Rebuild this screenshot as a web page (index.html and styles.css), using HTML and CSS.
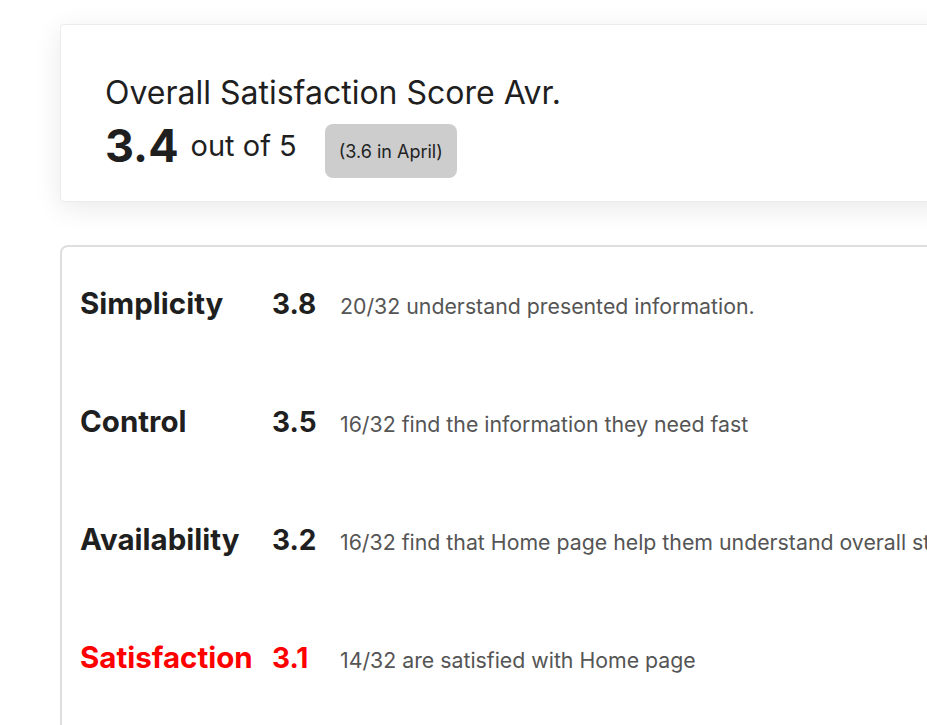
FILE: index.html
```html
<!DOCTYPE html>
<html>
<head>
<meta charset="utf-8">
<link rel="stylesheet" href="styles.css">
</head>
<body>
<div class="page">
  <section class="summary">
    <h1 class="summary-title">Overall Satisfaction Score Avr.</h1>
    <div class="summary-score">
      <span class="score-big">3.4</span>
      <span class="score-out">out of 5</span>
      <span class="badge">(3.6 in April)</span>
    </div>
  </section>
  <section class="metrics">
    <div class="row">
      <span class="label">Simplicity</span>
      <span class="value">3.8</span>
      <span class="desc">20/32 understand presented information.</span>
    </div>
    <div class="row">
      <span class="label">Control</span>
      <span class="value">3.5</span>
      <span class="desc">16/32 find the information they need fast</span>
    </div>
    <div class="row">
      <span class="label">Availability</span>
      <span class="value">3.2</span>
      <span class="desc">16/32 find that Home page help them understand overall status</span>
    </div>
    <div class="row row-alert">
      <span class="label">Satisfaction</span>
      <span class="value">3.1</span>
      <span class="desc">14/32 are satisfied with Home page</span>
    </div>
  </section>
</div>
</body>
</html>
```
FILE: styles.css
```css
html, body {
  margin: 0;
  padding: 0;
  background: #fff;
  overflow: hidden;
}
body {
  font-family: Inter, "Noto Sans", sans-serif;
  color: #1f1f1f;
}
.page {
  padding: 24px 0 0 60px;
  width: 1100px;
}
.summary {
  box-sizing: border-box;
  height: 178px;
  background: #fff;
  border: 1px solid #ececec;
  border-radius: 4px;
  box-shadow: 0 6px 28px rgba(0,0,0,0.09);
  padding: 49px 0 0 44px;
}
.summary-title {
  margin: 0;
  font-weight: 400;
  font-size: 32px;
  line-height: 38px;
  color: #1f1f1f;
}
.summary-score {
  display: flex;
  align-items: center;
  margin-top: 2px;
}
.score-big {
  font-size: 45px;
  font-weight: 700;
  line-height: 54px;
}
.score-out {
  font-size: 29px;
  margin-left: 12px;
  line-height: 54px;
}
.badge {
  margin-left: 28px;
  margin-top: 10px;
  background: #cdcdcd;
  border-radius: 8px;
  padding: 0 14px;
  height: 54px;
  display: flex;
  align-items: center;
  font-size: 18px;
  color: #222;
}
.metrics {
  margin-top: 43px;
  border: 2px solid #dedede;
  border-radius: 8px;
  height: 600px;
  padding: 38px 0 0 18px;
}
.row {
  display: grid;
  grid-template-columns: 192px 68px auto;
  align-items: baseline;
  height: 118px;
  white-space: nowrap;
}
.label {
  font-size: 29.5px;
  font-weight: 700;
  color: #1f1f1f;
}
.value {
  font-size: 28px;
  font-weight: 700;
  color: #1f1f1f;
}
.desc {
  font-size: 21.3px;
  color: #555;
  position: relative;
}
.row-alert .label, .row-alert .value {
  color: #ff0000;
}
```
